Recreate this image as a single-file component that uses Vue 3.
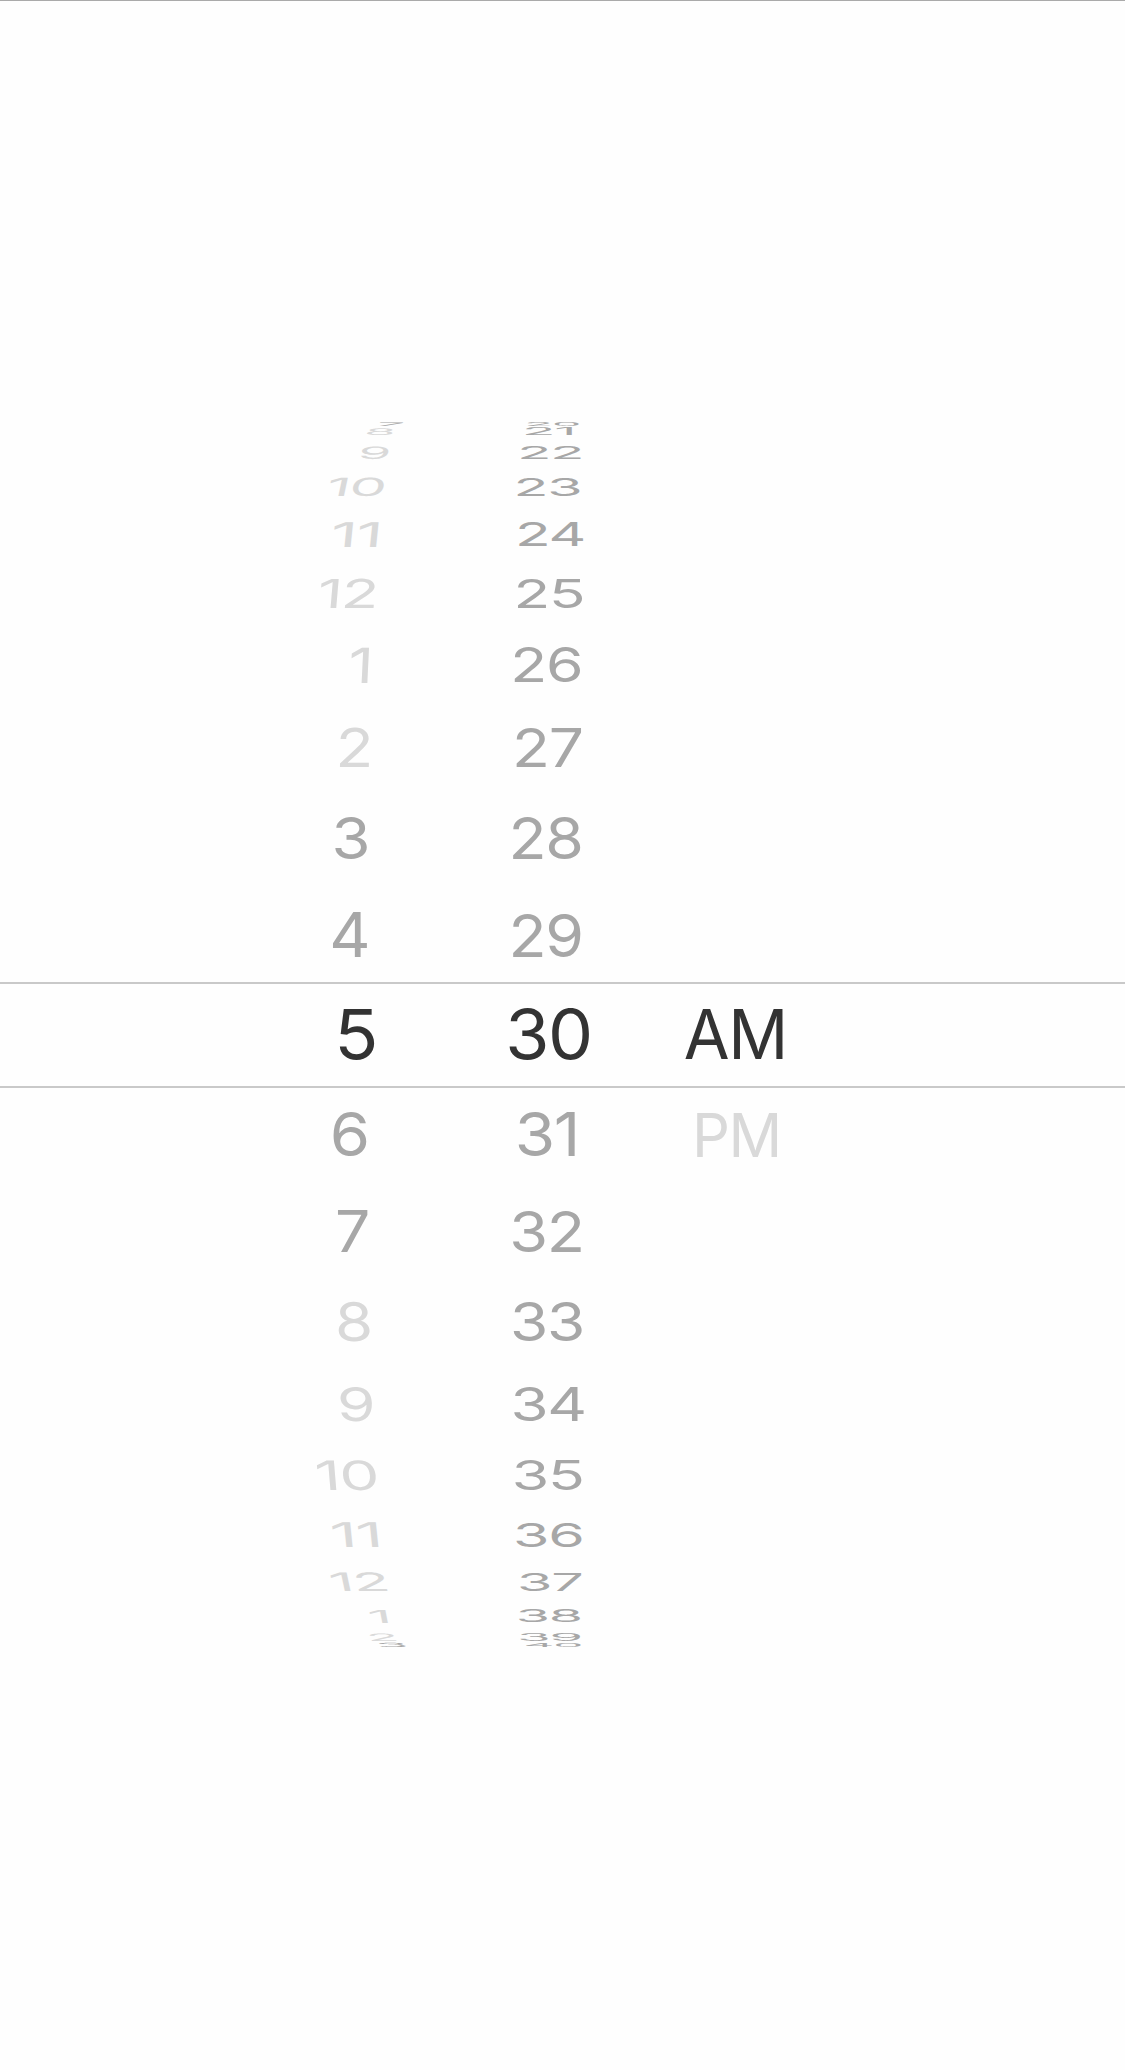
<script setup>
const ctx = document.createElement('canvas').getContext('2d')
ctx.font = '400 68px Inter, sans-serif'
ctx.letterSpacing = '-1.5px'

// Each label: text, left, right, top, bottom on the drum, tone, lean of the glyph tops
const wheels = [
  {
    name: 'hour',
    items: [
      ['7', 379, 404, 422.5, 426, 'near', 3],
      ['8', 368, 395.5, 428, 435, 'far', 3],
      ['9', 362, 390.7, 446.5, 459.5, 'far', 3],
      ['10', 330, 386, 477.6, 496.5, 'far', 4],
      ['11', 334, 379, 522, 546.5, 'far', 2.5],
      ['12', 320.8, 376.7, 579, 608.4, 'far', 2.5],
      ['1', 351.3, 369.5, 647.7, 682.5, 'far', 1.7],
      ['2', 340.3, 370, 727.5, 767, 'far', 0.8],
      ['3', 335.2, 366.8, 816.7, 860, 'near', 0],
      ['4', 332, 366.8, 912.7, 957, 'near', 0],
      ['5', 339.7, 375, 1009, 1060, 'on', 0],
      ['6', 333.7, 367.2, 1111.7, 1157.3, 'near', 0],
      ['7', 337.7, 368, 1210.5, 1252, 'near', 0],
      ['8', 338.5, 370.5, 1302, 1342, 'far', -0.6],
      ['9', 340.5, 373, 1386.5, 1421.7, 'far', -1],
      ['10', 317.3, 376.7, 1460.7, 1491, 'far', -2.5],
      ['11', 332.7, 378.3, 1522.7, 1547.3, 'far', -2.5],
      ['12', 331.3, 387.3, 1572.7, 1591.3, 'far', -4],
      ['1', 370, 387.7, 1609.7, 1622.5, 'far', -2.5],
      ['2', 370, 396.3, 1633.7, 1641.3, 'far', -3],
      ['3', 378.7, 406, 1643, 1647.3, 'near', -3],
    ],
  },
  {
    name: 'minute',
    items: [
      ['20', 528, 578.7, 422, 425.6, 'near', 0],
      ['21', 526, 572, 428, 435.3, 'near', 0],
      ['22', 521.3, 580.7, 446.5, 459.3, 'near', 0],
      ['23', 517.7, 579.3, 478, 496.5, 'near', 0],
      ['24', 519.3, 583, 522, 546.3, 'near', 0],
      ['25', 518, 582.7, 579, 608.7, 'near', 0],
      ['26', 514.7, 580.7, 647.5, 683, 'near', 0],
      ['27', 516.7, 581.7, 728, 767, 'near', 0],
      ['28', 513, 581, 816.7, 859.7, 'near', 0],
      ['29', 513, 581, 912, 957.5, 'near', 0],
      ['30', 509.5, 589, 1008, 1060, 'on', 0],
      ['31', 518.7, 575, 1111.7, 1157.3, 'near', 0],
      ['32', 513, 581, 1210, 1252.7, 'near', 0],
      ['33', 513.7, 581.7, 1302, 1342, 'near', 0],
      ['34', 514.1, 583.5, 1386.7, 1421.3, 'near', 0],
      ['35', 515.4, 582, 1460.7, 1491, 'near', 0],
      ['36', 516.5, 582, 1522.7, 1547.3, 'near', 0],
      ['37', 520.4, 581.7, 1572.7, 1591.3, 'near', 0],
      ['38', 519, 580.7, 1609.7, 1622.7, 'near', 0],
      ['39', 520.4, 580.7, 1633.7, 1641.3, 'near', 0],
      ['40', 525.7, 580.7, 1643, 1647, 'near', 0],
    ],
  },
  {
    name: 'period',
    items: [
      ['AM', 684.8, 783, 1009, 1059, 'on', 0],
      ['PM', 696.3, 777.6, 1112.7, 1156.7, 'far', 0],
    ],
  },
]

// Foreshortens a label so that its glyphs fill the given part of the drum
function project([text, left, right, top, bottom, , lean]) {
  const m = ctx.measureText(text)
  const inkHeight = m.actualBoundingBoxAscent + m.actualBoundingBoxDescent
  const inkWidth = m.actualBoundingBoxLeft + m.actualBoundingBoxRight
  const sx = (right - left - Math.abs(lean) * 0.5) / inkWidth
  const sy = (bottom - top) / inkHeight
  const x = left + m.actualBoundingBoxLeft * sx - lean * 0.6
  const y = bottom - m.actualBoundingBoxDescent * sy
  return `matrix(${sx} 0 ${-lean / inkHeight} ${sy} ${x} ${y})`
}
</script>

<template>
  <main class="picker">
    <div class="space"></div>
    <div class="selection"></div>
    <div class="space"></div>
    <svg class="drum" viewBox="0 0 1125 2070" width="1125" height="2070">
      <g v-for="wheel in wheels" :key="wheel.name">
        <text
          v-for="(item, i) in wheel.items"
          :key="i"
          :class="item[5]"
          :transform="project(item)"
        >{{ item[0] }}</text>
      </g>
    </svg>
  </main>
</template>

<style>
body {
  margin: 0;
  background: #fefefe;
}
</style>

<style scoped>
.picker {
  position: relative;
  box-sizing: border-box;
  width: 1125px;
  height: 2070px;
  display: grid;
  grid-template-rows: 981px 106px 1fr;
  border-top: 1px solid #aaa;
  overflow: hidden;
  background: #fefefe;
}
.selection {
  border-top: 2px solid #c9c9c9;
  border-bottom: 2px solid #c9c9c9;
}
.drum {
  position: absolute;
  top: -1px;
  left: 0;
  display: block;
}
.drum text {
  font: 400 68px Inter, sans-serif;
  letter-spacing: -1.5px;
}
.on {
  fill: #333;
}
.near {
  fill: #a7a7a7;
}
.far {
  fill: #d9d9d9;
}
</style>
